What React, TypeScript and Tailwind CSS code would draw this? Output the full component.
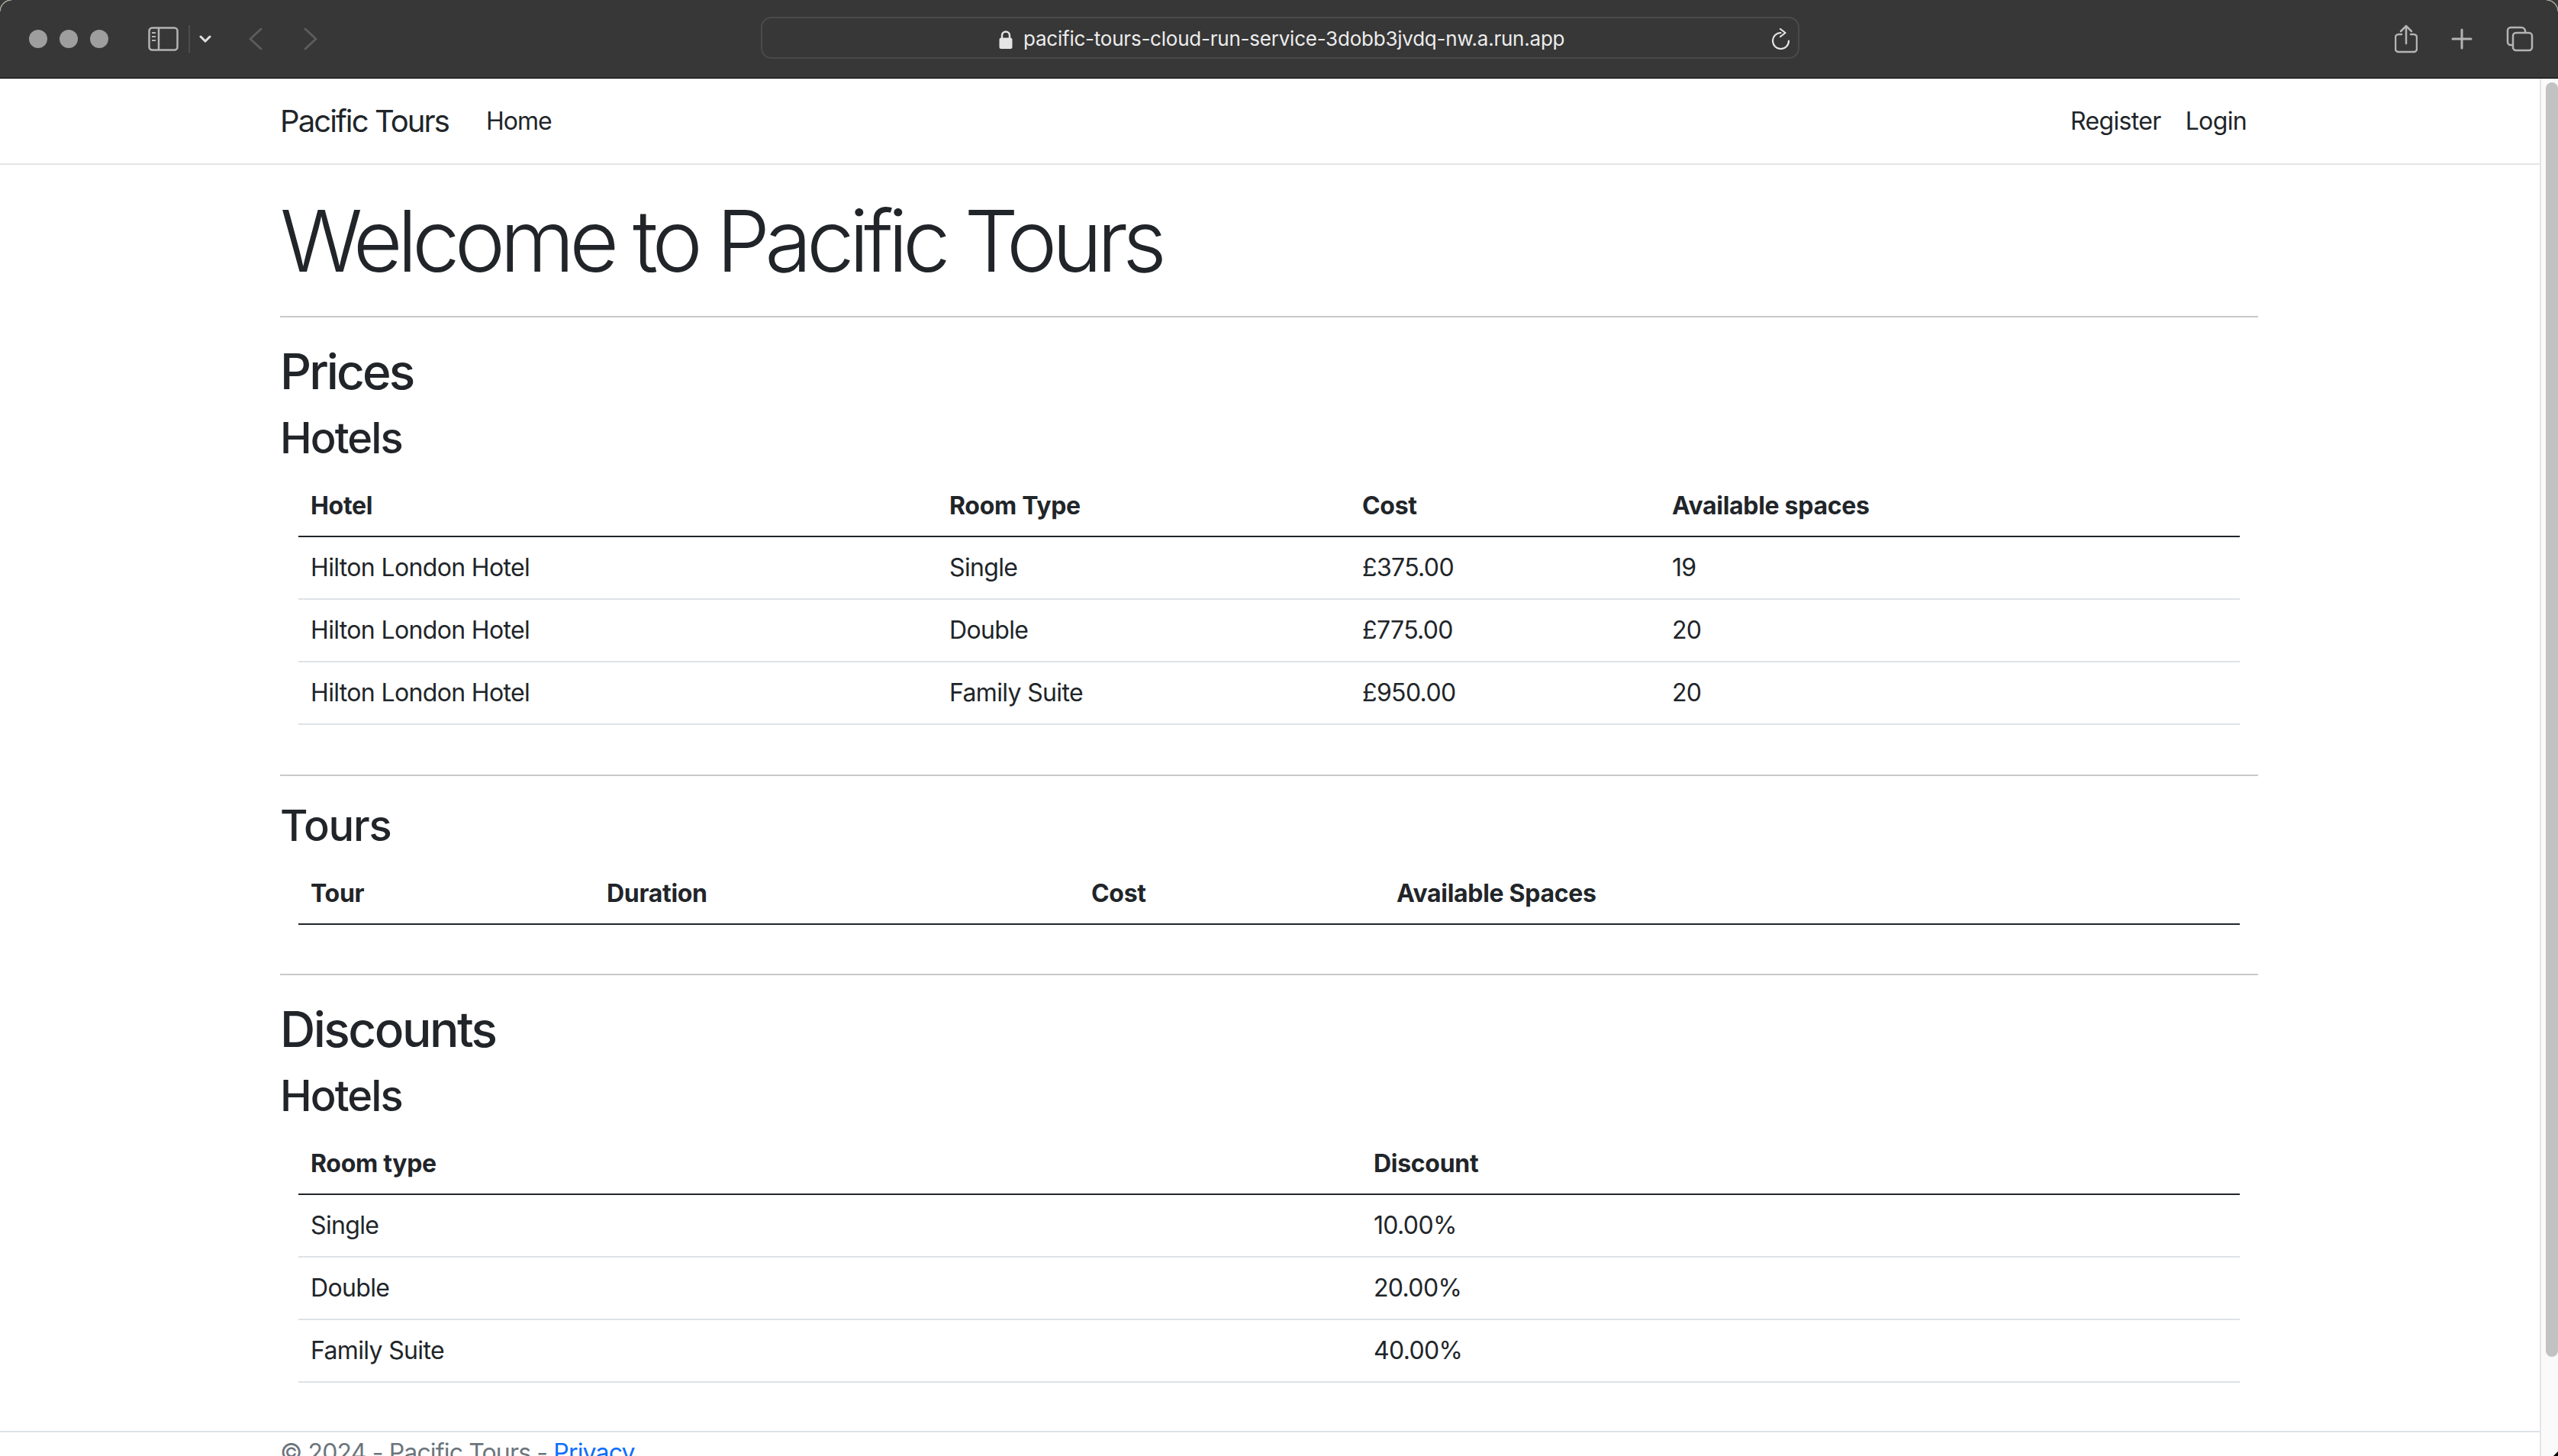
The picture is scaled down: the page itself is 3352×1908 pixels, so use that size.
const hotelPrices = [
  ["Hilton London Hotel", "Single", "£375.00", "19"],
  ["Hilton London Hotel", "Double", "£775.00", "20"],
  ["Hilton London Hotel", "Family Suite", "£950.00", "20"],
];

const discounts = [
  ["Single", "10.00%"],
  ["Double", "20.00%"],
  ["Family Suite", "40.00%"],
];

function TableHead({ labels }: { labels: string[] }) {
  return (
    <thead>
      <tr className="border-b-2 border-[#212529]">
        {labels.map((label) => (
          <th key={label} className="px-4 pt-[15px] pb-[15px] text-left font-bold leading-[48px] tracking-[-0.3px]">
            {label}
          </th>
        ))}
      </tr>
    </thead>
  );
}

function TableRow({ cells }: { cells: string[] }) {
  return (
    <tr className="border-b-2 border-[#dee2e6]">
      {cells.map((cell, i) => (
        <td key={i} className="px-4 py-4 leading-[48px]">
          {cell}
        </td>
      ))}
    </tr>
  );
}

function Toolbar() {
  return (
    <div className="relative flex h-[103px] shrink-0 items-center border-b border-black bg-[#373737]">
      <svg className="absolute left-0 top-0" width="18" height="18" viewBox="0 0 18 18" fill="none" stroke="#a8a89c" strokeWidth="1.5">
        <path d="M0 15C0 7 7 0 15 0" />
      </svg>
      <svg className="absolute right-0 top-0" width="18" height="18" viewBox="0 0 18 18" fill="none" stroke="#a8a89c" strokeWidth="1.5">
        <path d="M18 15C18 7 11 0 3 0" />
      </svg>
      <div className="ml-[38px] flex gap-4">
        <div className="h-6 w-6 rounded-full bg-[#9e9e9e]" />
        <div className="h-6 w-6 rounded-full bg-[#9e9e9e]" />
        <div className="h-6 w-6 rounded-full bg-[#9e9e9e]" />
      </div>
      <svg className="ml-[52px]" width="40" height="32" viewBox="0 0 40 32" fill="none" stroke="#b4b4b4" strokeWidth="2.5">
        <rect x="1.5" y="1.5" width="37" height="29" rx="4" />
        <path d="M14 2v28" />
        <path d="M5 8h5M5 13h5M5 18h5" strokeWidth="2" />
      </svg>
      <div className="ml-[13px] h-9 w-[2px] bg-[#4d4d4d]" />
      <svg className="ml-[12px]" width="16" height="12" viewBox="0 0 16 12" fill="none" stroke="#e0e0e0" strokeWidth="3" strokeLinecap="round" strokeLinejoin="round">
        <path d="M2 3l6 6 6-6" />
      </svg>
      <svg className="ml-[49px]" width="18" height="30" viewBox="0 0 18 30" fill="none" stroke="#5c5c5c" strokeWidth="3" strokeLinecap="round" strokeLinejoin="round">
        <path d="M16 2L2 15l14 13" />
      </svg>
      <svg className="ml-[54px]" width="18" height="30" viewBox="0 0 18 30" fill="none" stroke="#5c5c5c" strokeWidth="3" strokeLinecap="round" strokeLinejoin="round">
        <path d="M2 2l14 13L2 28" />
      </svg>
      <div className="relative mb-[3px] ml-[581px] flex h-[55px] w-[1361px] items-center rounded-[14px] border-2 border-[#4a4a4a] pl-[310px] pt-[3px]">
        <svg width="18" height="25" viewBox="0 0 18 25" fill="#e4e4e4">
          <path d="M4 12V7.5a5 5 0 0 1 10 0V12" fill="none" stroke="#e4e4e4" strokeWidth="2.4" />
          <rect x="0.5" y="10.5" width="17" height="14.5" rx="2.5" />
        </svg>
        <span className="ml-[14px] text-[26px] leading-8 tracking-[-0.23px] text-[#ececec]">pacific-tours-cloud-run-service-3dobb3jvdq-nw.a.run.app</span>
        <svg className="absolute right-[10px] top-[13px]" width="24" height="28" viewBox="0 0 24 28" fill="none" stroke="#e4e4e4" strokeWidth="2.2" strokeLinecap="round" strokeLinejoin="round">
          <path d="M11.5 6A10.5 10.5 0 1 0 22 16.5" />
          <path d="M11 1l6.5 5L11 11" />
        </svg>
      </div>
      <svg className="ml-auto" width="30" height="38" viewBox="0 0 30 38" fill="none" stroke="#b4b4b4" strokeWidth="2.5" strokeLinecap="round" strokeLinejoin="round">
        <path d="M9 13H5a4 4 0 0 0-4 4v15a4 4 0 0 0 4 4h20a4 4 0 0 0 4-4V17a4 4 0 0 0-4-4h-4" />
        <path d="M15 25V2M8 9l7-7 7 7" />
      </svg>
      <svg className="ml-[44px]" width="28" height="28" viewBox="0 0 28 28" fill="none" stroke="#b4b4b4" strokeWidth="3" strokeLinecap="round">
        <path d="M14 2v24M2 14h24" />
      </svg>
      <svg className="ml-[44px] mr-[32px]" width="36" height="34" viewBox="0 0 36 34" fill="none" stroke="#b4b4b4" strokeWidth="2.5">
        <path d="M8 25H6a4 4 0 0 1-4-4V6a4 4 0 0 1 4-4h14a5 5 0 0 1 5 5v1" />
        <rect x="9" y="9" width="25" height="23" rx="4" />
      </svg>
    </div>
  );
}

export default function App() {
  return (
    <div className="flex h-[1908px] flex-col overflow-hidden bg-white text-[32px] text-[#212529] [font-family:Inter,sans-serif] tracking-[-0.65px]">
      <Toolbar />
      <div className="flex min-h-0 flex-1">
        <div className="min-w-0 flex-1 overflow-hidden">
          <nav className="h-[113px] border-b-2 border-[#e5e5e5]">
            <div className="mx-auto flex h-[111px] w-[2640px] items-center pl-[23px] pr-6">
              <a className="text-[40px] leading-[60px] tracking-[-1.9px]">Pacific Tours</a>
              <a className="ml-[49px] tracking-[-1px]">Home</a>
              <a className="ml-auto">Register</a>
              <a className="ml-[32px] mr-[16px]">Login</a>
            </div>
          </nav>

          <main className="mx-auto w-[2640px] pl-[23px] pr-[25px] pt-8">
            <h1 className="text-[112px] font-light leading-[134px] tracking-[-6.85px]">Welcome to Pacific Tours</h1>
            <hr className="mb-8 mt-8 border-t-2 border-[#c8c9ca]" />

            <h2 className="mb-4 text-[64px] font-medium leading-[77px] tracking-[-2.9px]">Prices</h2>
            <h3 className="mb-4 text-[56px] font-medium leading-[67px] tracking-[-1.9px]">Hotels</h3>
            <table className="ml-6 w-[2544px] table-fixed border-collapse">
              <colgroup>
                <col className="w-[837px]" />
                <col className="w-[541px]" />
                <col className="w-[406px]" />
                <col />
              </colgroup>
              <TableHead labels={["Hotel", "Room Type", "Cost", "Available spaces"]} />
              <tbody>
                {hotelPrices.map((row) => (
                  <TableRow key={row[1]} cells={row} />
                ))}
              </tbody>
            </table>
            <hr className="mb-8 mt-[65px] border-t-2 border-[#c8c9ca]" />

            <h3 className="mb-4 text-[56px] font-medium leading-[67px] tracking-[-1.2px]">Tours</h3>
            <table className="ml-6 w-[2544px] table-fixed border-collapse">
              <colgroup>
                <col className="w-[388px]" />
                <col className="w-[635px]" />
                <col className="w-[400px]" />
                <col />
              </colgroup>
              <TableHead labels={["Tour", "Duration", "Cost", "Available Spaces"]} />
            </table>
            <hr className="mb-8 mt-16 border-t-2 border-[#c8c9ca]" />

            <h2 className="mb-4 text-[64px] font-medium leading-[77px] tracking-[-2.5px]">Discounts</h2>
            <h3 className="mb-4 text-[56px] font-medium leading-[67px] tracking-[-1.9px]">Hotels</h3>
            <table className="ml-6 w-[2544px] table-fixed border-collapse">
              <colgroup>
                <col className="w-[1393px]" />
                <col />
              </colgroup>
              <TableHead labels={["Room type", "Discount"]} />
              <tbody>
                {discounts.map((row) => (
                  <TableRow key={row[0]} cells={row} />
                ))}
              </tbody>
            </table>
          </main>

          <footer className="mt-[63px] border-t-2 border-[#dee2e6] text-[#6c757d]">
            <div className="mx-auto w-[2640px] pl-[23px] pr-6 leading-[54px] tracking-[-0.85px]">
              © 2024 - Pacific Tours - <a className="text-[#0d6efd]">Privacy</a>
            </div>
          </footer>
        </div>

        <div className="relative w-[24px] shrink-0 border-l-2 border-[#e5e5e5] bg-[#fafafa]">
          <div className="ml-[6px] mt-[5px] h-[1670px] w-4 rounded-full bg-[#c2c2c2]" />
          <svg className="absolute bottom-0 right-0" width="6" height="6" viewBox="0 0 6 6" fill="#000">
            <path d="M6 0v6H0z" />
          </svg>
        </div>
      </div>
    </div>
  );
}
